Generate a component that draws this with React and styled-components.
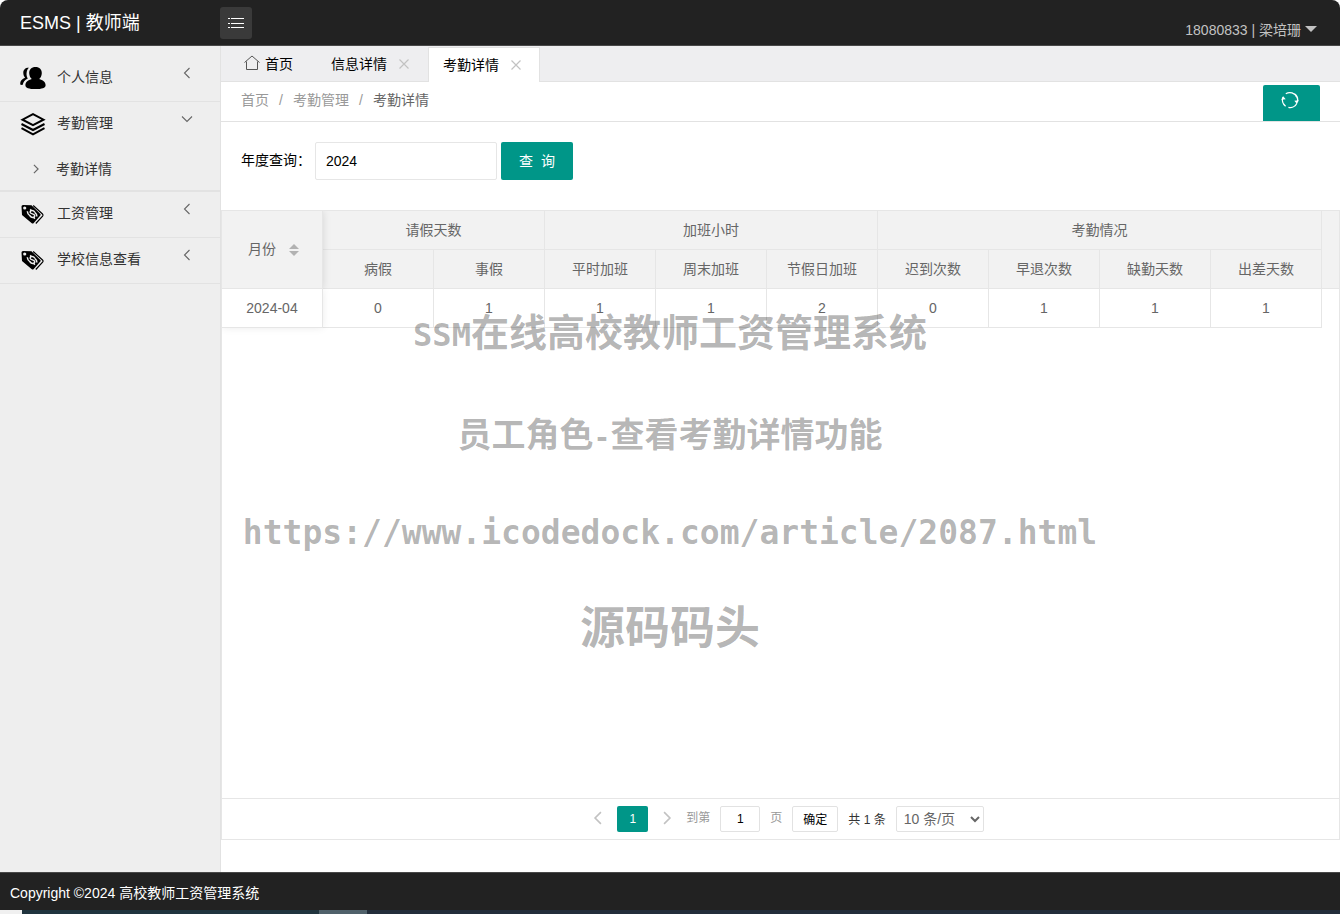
import React from 'react'
import styled, { createGlobalStyle } from 'styled-components'

const GlobalStyle = createGlobalStyle`
  * {
    box-sizing: border-box;
  }
  body {
    margin: 0;
    background: #fff;
  }
  body, button, input, select {
    font-family: 'Liberation Sans', 'Noto Sans CJK SC', sans-serif;
    font-size: 14px;
  }
  a {
    color: inherit;
    text-decoration: none;
  }
`

const Page = styled.div`
  display: flex;
  flex-direction: column;
  min-height: 100vh;
  color: #000;
`

/* top bar */

const Header = styled.header`
  display: flex;
  height: 46px;
  background: #222;
  border-bottom: 1px solid #484848;
  border-radius: 8px 8px 0 0;
`

const Logo = styled.h1`
  width: 220px;
  margin: 0;
  padding-left: 20px;
  color: #fff;
  font-size: 18px;
  font-weight: normal;
  line-height: 46px;
`

const MenuButton = styled.button`
  display: flex;
  align-items: center;
  justify-content: center;
  width: 32px;
  height: 32px;
  margin-top: 7px;
  padding: 0;
  border: none;
  border-radius: 3px;
  background: #3a3a3a;
  cursor: pointer;
`

const User = styled.a`
  display: flex;
  align-items: center;
  gap: 4px;
  margin-left: auto;
  padding: 12px 23px 0 0;
  color: #c2c2c2;
`

const Caret = styled.span`
  border: 6px solid transparent;
  border-top-color: #c2c2c2;
  border-bottom: none;
`

/* sidebar */

const Body = styled.div`
  display: flex;
  flex: 1;
`

const Sidebar = styled.nav`
  width: 221px;
  flex-shrink: 0;
  padding-top: 10px;
  background: #eee;
  border-right: 1px solid #e2e2e2;
`

const MenuItem = styled.a`
  display: flex;
  align-items: center;
  gap: 11px;
  height: ${props => (props.$open ? '45px' : '46px')};
  padding: 0 27px 2px 20px;
  color: #333;
  border-bottom: ${props => (props.$open ? 'none' : '1px solid #e2e2e2')};
`

const MenuText = styled.span`
  flex: 1;
  padding-bottom: 4px;
`

const Arrow = styled.span`
  display: flex;
  padding-bottom: 10px;
`

const SubItem = styled.a`
  display: flex;
  align-items: center;
  gap: 15px;
  height: 45px;
  padding-left: 31px;
  color: #333;
  border-bottom: 2px solid #e2e2e2;
`

const SubText = styled.span`
  padding-bottom: 2px;
`

/* content */

const Main = styled.main`
  display: flex;
  flex: 1;
  flex-direction: column;
  min-width: 0;
`

const Tabs = styled.div`
  display: flex;
  align-items: flex-end;
  height: 36px;
  padding-left: 8px;
  background: #eeeef0;
  border-bottom: 1px solid #e2e2e2;
`

const Tab = styled.a`
  display: flex;
  align-items: center;
  gap: ${props => (props.$home ? '5px' : '8px')};
  height: ${props => (props.$active ? '35px' : '34px')};
  margin-right: ${props => (props.$home ? '8px' : '0')};
  margin-bottom: ${props => (props.$active ? '-1px' : '0')};
  padding: 0 14px 3px;
  border: 1px solid ${props => (props.$active ? '#e2e2e2' : 'transparent')};
  border-bottom: none;
  background: ${props => (props.$active ? '#fff' : 'transparent')};
`

const Crumbs = styled.div`
  display: flex;
  align-items: stretch;
  height: 40px;
  padding: 0 20px;
  color: #999;
  line-height: 37px;
  border-bottom: 1px solid #e2e2e2;
`

const Slash = styled.span`
  width: 24px;
  text-align: center;
`

const Current = styled.span`
  color: #666;
`

const Refresh = styled.button`
  display: flex;
  align-items: flex-start;
  align-self: flex-end;
  justify-content: center;
  width: 57px;
  height: 36px;
  margin-left: auto;
  padding: 6px 3px 0 0;
  border: none;
  border-radius: 2px 2px 0 0;
  background: #009688;
  cursor: pointer;
`

const Search = styled.form`
  display: flex;
  align-items: center;
  gap: 4px;
  padding: 20px 20px 30px;
`

const SearchLabel = styled.label`
  width: 70px;
  padding-bottom: 4px;
  white-space: nowrap;
`

const YearInput = styled.input`
  width: 182px;
  height: 38px;
  padding: 0 10px;
  border: 1px solid #e6e6e6;
  border-radius: 2px;
`

const SearchButton = styled.button`
  width: 72px;
  height: 38px;
  padding: 0 0 2px;
  border: none;
  border-radius: 2px;
  background: #009688;
  color: #fff;
  white-space: pre;
  cursor: pointer;
`

const TableBox = styled.section`
  display: flex;
  flex: 1;
  flex-direction: column;
  margin-bottom: 32px;
  border: 1px solid #e6e6e6;
`

const TableScroll = styled.div`
  flex: 1;
  overflow: hidden;
`

const Table = styled.table`
  width: 100%;
  table-layout: fixed;
  border-spacing: 0;
  color: #666;
  text-align: center;

  th, td {
    height: 39px;
    padding: 0;
    border-right: 1px solid #e6e6e6;
    border-bottom: 1px solid #e6e6e6;
    font-weight: normal;
  }
  th {
    padding-bottom: 2px;
    background: #f2f2f2;
  }
`

const MonthCol = styled.col`
  width: 101px;
`

const DataCol = styled.col`
  width: 111px;
`

const MonthHead = styled.th`
  position: relative;
  box-shadow: 0 0 8px rgba(0, 0, 0, 0.12);
  clip-path: inset(0 -8px 0 0);
`

const MonthCell = styled.td`
  position: relative;
  box-shadow: 0 0 8px rgba(0, 0, 0, 0.08);
  clip-path: inset(0 -8px -8px 0);
`

const RestHead = styled.th`
  && {
    border-right: none;
  }
`

const RestCell = styled.td`
  && {
    border: none;
  }
`

const Sortable = styled.span`
  display: inline-flex;
  align-items: center;
  gap: 13px;
  padding: 0 0 2px 3px;
`

const SortMarks = styled.span`
  display: flex;
  flex-direction: column;
  gap: 2px;
  padding-top: 5px;
`

const SortMark = styled.i`
  border: 5px solid transparent;
  ${props => (props.$up ? 'border-top: none; border-bottom-color: #b2b2b2;' : 'border-bottom: none; border-top-color: #b2b2b2;')}
`

/* pagination */

const Pager = styled.div`
  display: flex;
  align-items: center;
  justify-content: center;
  height: 41px;
  padding-left: 2px;
  border-top: 1px solid #e6e6e6;
  color: #999;
  font-size: 12px;
`

const PageStep = styled.button`
  display: flex;
  align-items: center;
  justify-content: center;
  width: 38px;
  height: 26px;
  padding: 0 0 2px;
  border: none;
  background: none;
`

const PageNumber = styled.button`
  width: 31px;
  height: 26px;
  padding: 0;
  border: none;
  border-radius: 2px;
  background: #009688;
  color: #fff;
  font-size: 12px;
`

const PageJump = styled.div`
  display: flex;
  align-items: center;
  gap: 10px;
`

const JumpLabel = styled.label`
  display: flex;
  gap: 10px;
  line-height: 24px;
`

const PageInput = styled.input`
  width: 40px;
  height: 26px;
  padding: 0;
  border: 1px solid #e2e2e2;
  border-radius: 2px;
  font-size: 12px;
  text-align: center;
`

const ConfirmButton = styled.button`
  width: 46px;
  height: 26px;
  padding: 0 0 1px;
  border: 1px solid #e2e2e2;
  border-radius: 2px;
  background: #fff;
  font-size: 12px;
`

const Total = styled.span`
  padding-bottom: 2px;
  color: #333;
`

const PageSize = styled.select`
  width: 88px;
  height: 26px;
  padding: 0 3px;
  border: 1px solid #e2e2e2;
  border-radius: 2px;
  background: #fff;
  color: #666;
`

/* bottom */

const Footer = styled.footer`
  height: 38px;
  padding-left: 10px;
  background: #222;
  border-top: 1px solid #484848;
  color: #fff;
  line-height: 40px;
`

const BottomStrip = styled.div`
  display: flex;
  height: 4px;
  background: #222d3a;
`

const StripPart = styled.span`
  width: ${props => props.$width}px;
  background: ${props => props.$color};
`

const Watermark = styled.div`
  position: absolute;
  top: 300px;
  left: 0;
  right: 0;
  color: rgba(0, 0, 0, 0.3);
  font-family: 'Noto Sans CJK SC', sans-serif;
  font-weight: bold;
  line-height: 60px;
  text-align: center;
  white-space: nowrap;
  pointer-events: none;
`

const MarkLine = styled.div`
  height: 60px;
  margin-bottom: ${props => props.$gap || 0}px;
  font-size: ${props => props.$size}px;
`

const Mono = styled.span`
  font-family: 'DejaVu Sans Mono', monospace;
  font-size: ${props => props.$size}px;
`

const UsersIcon = () => (
  <svg width="26" height="26" viewBox="0 0 26 26">
    <path d="M15.5 2c4 0 6.500 2.600 6.300 6.200-.1 2.600-1.200 4.600-2.600 5.900 3.600.9 6.400 3 6.400 6.100 0 2.600-3.600 3.900-10.100 3.900S5.400 22.800 5.400 20.200c0-3.100 2.800-5.200 6.400-6.100-1.400-1.300-2.500-3.300-2.600-5.900C9 4.600 11.500 2 15.500 2z" />
    <path d="M9 2.800C5.600 2.500 3.200 4.600 3.300 7.900c.1 2 .8 3.500 1.800 4.800C2.200 13.800.3 15.900.2 18.300c0 .7.200 1.200.6 1.600l2-.1c.3-2.700 1.800-4.800 5-6.300C6.500 11.400 6.300 9.400 6.700 7 7 5.200 7.800 3.800 9 2.800z" />
  </svg>
)

const LayersIcon = () => (
  <svg width="26" height="26" viewBox="0 0 26 26" fill="none" stroke="#000" strokeWidth="2">
    <path d="M13 3.200L23.500 8.700 13 14.200 2.500 8.700z" />
    <path d="M1.500 13L13 19l11.500-6M1.500 17.200L13 23.300l11.500-6.100" />
  </svg>
)

const TagIcon = () => (
  <svg width="26" height="26" viewBox="0 0 26 26">
    <path d="M1.500 5.500q0-1.500 1.500-1.500l8.500.3 8.800 8.700q.8.800 0 1.600l-6.800 7.600q-.8.800-1.700 0L2 14z" />
    <path d="M13.200 4.500l9.300 8.500q1 1 .1 2.100l-6.800 7.400" fill="none" stroke="#000" strokeWidth="1.200" />
    <circle cx="4.700" cy="7" r="1.600" fill="#eee" />
    <path d="M14.800 11.200c-1.600-2.400-4.600-2-4.700-.1-.1 2.200 4.500 1.400 4.600 3.600.1 2-3 2.600-5-.2M7.300 10.200c.2 2.300 1 3.500 2.600 4.500M16.900 15.600c0-1.900-.8-3.300-2.200-4.300M10.300 8.300l.9 1.300M13.800 16.400l1 1.400" fill="none" stroke="#eee" strokeWidth="1.500" />
  </svg>
)

const MenuIcon = () => (
  <svg width="18" height="16" viewBox="0 0 18 16" stroke="#fff" strokeWidth="1">
    <path d="M1 3.500h2M4 3.500h13M1 8.500h2M4 8.500h13M1 12.500h2M4 12.500h13" />
  </svg>
)

const HomeIcon = () => (
  <svg width="16" height="16" viewBox="0 0 16 16" fill="none" stroke="#555">
    <path d="M.5 7.500L8 1l7.500 6.500M2.500 6.500v8h11v-8" />
  </svg>
)

const CloseIcon = () => (
  <svg width="18" height="16" viewBox="0 0 18 16" stroke="#c2c2c2" strokeWidth="1.200">
    <path d="M4.500 4.500l9 9M13.500 4.500l-9 9" />
  </svg>
)

const RefreshIcon = () => (
  <svg width="18" height="18" viewBox="0 0 18 18" fill="none" stroke="#fff" strokeWidth="1.300">
    <path d="M4.600 15.200A7.600 7.600 0 0 1 2.100 6M4.800 2.700a7.600 7.600 0 0 1 11 3.500M15.900 12.200a7.600 7.600 0 0 1-8.500 4.200M13.400 2.900a7.600 7.600 0 0 1 2.900 8.300" />
    <path d="M.2 8.700l2-3.500 2.500 3zM17.800 9.300l-2 3.500-2.500-3z" fill="#fff" stroke="none" />
  </svg>
)

const Chevron = ({ dir, color = '#666', size = 12, width = 1.1 }) => {
  const paths = {
    left: 'M8.500 1L3.500 6l5 5',
    right: 'M3.500 1l5 5-5 5',
    down: 'M1 3.500l5 5 5-5',
  }
  return (
    <svg width={size} height={size} viewBox="0 0 12 12" fill="none" stroke={color} strokeWidth={width}>
      <path d={paths[dir]} />
    </svg>
  )
}

const menu = [
  { text: '个人信息', icon: <UsersIcon /> },
  { text: '考勤管理', icon: <LayersIcon />, children: ['考勤详情'] },
  { text: '工资管理', icon: <TagIcon /> },
  { text: '学校信息查看', icon: <TagIcon /> },
]

const groups = [
  { title: '请假天数', columns: ['病假', '事假'] },
  { title: '加班小时', columns: ['平时加班', '周末加班', '节假日加班'] },
  { title: '考勤情况', columns: ['迟到次数', '早退次数', '缺勤天数', '出差天数'] },
]
const columns = groups.flatMap(group => group.columns)

const rows = [{ month: '2024-04', values: [0, 1, 1, 1, 2, 0, 1, 1, 1] }]

function SideMenu() {
  return (
    <Sidebar>
      {menu.map(item => (
        <React.Fragment key={item.text}>
          <MenuItem href="#" $open={!!item.children}>
            {item.icon}
            <MenuText>{item.text}</MenuText>
            <Arrow><Chevron dir={item.children ? 'down' : 'left'} /></Arrow>
          </MenuItem>
          {item.children && item.children.map(text => (
            <SubItem href="#" key={text}>
              <Chevron dir="right" size={10} width={1.4} />
              <SubText>{text}</SubText>
            </SubItem>
          ))}
        </React.Fragment>
      ))}
    </Sidebar>
  )
}

function AttendanceTable() {
  return (
    <Table>
      <colgroup>
        <MonthCol />
        {columns.map(name => <DataCol key={name} />)}
        <col />
      </colgroup>
      <thead>
        <tr>
          <MonthHead rowSpan={2}>
            <Sortable>
              月份
              <SortMarks>
                <SortMark $up />
                <SortMark />
              </SortMarks>
            </Sortable>
          </MonthHead>
          {groups.map(group => (
            <th key={group.title} colSpan={group.columns.length}>{group.title}</th>
          ))}
          <RestHead rowSpan={2} />
        </tr>
        <tr>
          {columns.map(name => <th key={name}>{name}</th>)}
        </tr>
      </thead>
      <tbody>
        {rows.map(row => (
          <tr key={row.month}>
            <MonthCell>{row.month}</MonthCell>
            {row.values.map((value, i) => <td key={columns[i]}>{value}</td>)}
            <RestCell />
          </tr>
        ))}
      </tbody>
    </Table>
  )
}

function Pagination() {
  return (
    <Pager>
      <PageStep aria-label="上一页"><Chevron dir="left" color="#c2c2c2" size={14} width={1.4} /></PageStep>
      <PageNumber>1</PageNumber>
      <PageStep aria-label="下一页"><Chevron dir="right" color="#c2c2c2" size={14} width={1.4} /></PageStep>
      <PageJump>
        <JumpLabel>
          到第
          <PageInput defaultValue="1" />
          页
        </JumpLabel>
        <ConfirmButton>确定</ConfirmButton>
        <Total>共 1 条</Total>
        <PageSize aria-label="每页条数">
          <option>10 条/页</option>
        </PageSize>
      </PageJump>
    </Pager>
  )
}

export default function App() {
  return (
    <Page>
      <GlobalStyle />
      <Header>
        <Logo>ESMS | 教师端</Logo>
        <MenuButton aria-label="菜单"><MenuIcon /></MenuButton>
        <User href="#">18080833 | 梁培珊<Caret /></User>
      </Header>
      <Body>
        <SideMenu />
        <Main>
          <Tabs>
            <Tab href="#" $home><HomeIcon />首页</Tab>
            <Tab href="#">信息详情<CloseIcon /></Tab>
            <Tab href="#" $active>考勤详情<CloseIcon /></Tab>
          </Tabs>
          <Crumbs>
            <a href="#">首页</a>
            <Slash>/</Slash>
            <a href="#">考勤管理</a>
            <Slash>/</Slash>
            <Current>考勤详情</Current>
            <Refresh aria-label="刷新"><RefreshIcon /></Refresh>
          </Crumbs>
          <Search onSubmit={e => e.preventDefault()}>
            <SearchLabel htmlFor="year">年度查询：</SearchLabel>
            <YearInput id="year" defaultValue="2024" />
            <SearchButton>查  询</SearchButton>
          </Search>
          <TableBox>
            <TableScroll>
              <AttendanceTable />
            </TableScroll>
            <Pagination />
          </TableBox>
        </Main>
      </Body>
      <Footer>Copyright ©2024 高校教师工资管理系统</Footer>
      <BottomStrip>
        <StripPart $width={22} $color="#f0f0f0" />
        <StripPart $width={297} $color="#20343e" />
        <StripPart $width={48} $color="#50616b" />
      </BottomStrip>
      <Watermark>
        <MarkLine $size={38} $gap={43}><Mono $size={32}>SSM</Mono>在线高校教师工资管理系统</MarkLine>
        <MarkLine $size={34} $gap={34}>员工角色<Mono $size={28}>-</Mono>查看考勤详情功能</MarkLine>
        <MarkLine $size={40} $gap={38}><Mono $size={33}>https://www.icodedock.com/article/2087.html</Mono></MarkLine>
        <MarkLine $size={45}>源码码头</MarkLine>
      </Watermark>
    </Page>
  )
}
